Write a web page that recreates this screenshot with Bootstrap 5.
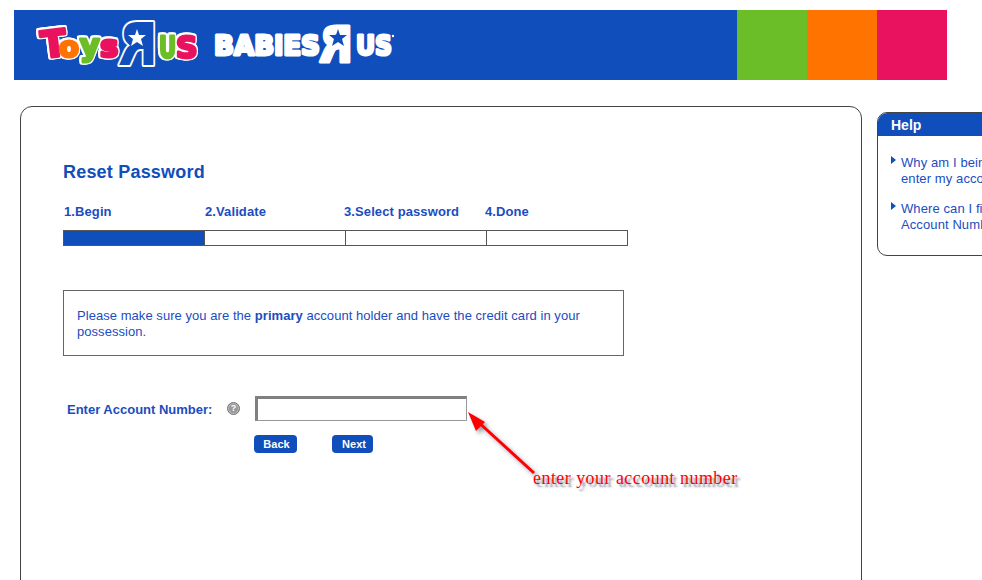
<!DOCTYPE html>
<html lang="en">
<head>
  <meta charset="UTF-8">
  <meta name="viewport" content="width=device-width, initial-scale=1.0">
  <title>Reset Password</title>
  <link href="https://cdn.jsdelivr.net/npm/bootstrap@5.3.0/dist/css/bootstrap.min.css" rel="stylesheet">
  <style>
    html, body { height: 580px; overflow: hidden; }
    body { background: #fff; color: #1a4dbf; font-family: "Liberation Sans", Arial, sans-serif; font-size: 12px; position: relative; }
    .site-banner { margin: 10px 0 0 14px; width: 933px; height: 70px; background: #104ebb; }
    .site-banner svg { display: block; }
    .swatch { width: 70px; height: 70px; }
    .swatch-green { background: #6cbe28; }
    .swatch-orange { background: #ff7300; }
    .swatch-pink { background: #e9125f; }
    .page-row { margin: 26px 0 0 20px; width: 1100px; }
    .main-panel { width: 842px; height: 520px; flex: none; border: 1px solid #444; border-radius: 12px; padding: 55px 0 0 42px; background: #fff; }
    .page-title { font-size: 18px; font-weight: 700; line-height: 21px; margin: 0 0 21px 0; color: #104ebb; letter-spacing: .2px; }
    .step-labels { font-size: 13px; font-weight: 700; line-height: 16px; margin-bottom: 10px; letter-spacing: .1px; }
    .step-label { width: 141px; padding-left: 1px; }
    .step-label:nth-child(2) { width: 139px; }
    .step-bar { width: 565px; height: 16px; border: 1px solid #555; }
    .step-cell { width: 141px; flex: none; border-right: 1px solid #555; }
    .step-cell:last-child { width: 140px; border-right: 0; }
    .step-on { background: #104ebb; }
    .notice-box { width: 561px; height: 66px; margin-top: 44px; border: 1px solid #666; padding: 17px 13px; line-height: 16px; font-size: 13px; letter-spacing: .05px; }
    .notice-box p { margin: 0; width: 520px; }
    .acct-row { margin-top: 40px; height: 25px; }
    .acct-label { width: 164px; margin-top: 2px; padding-left: 4px; font-weight: 700; font-size: 13px; white-space: nowrap; }
    .acct-help { width: 13px; height: 13px; flex: none; border-radius: 50%; background: #999; border: 1px solid #777; color: #fff; font-size: 9px; font-weight: 700; line-height: 11px; text-align: center; margin-right: 15px; box-shadow: inset 0 0 0 1px #bbb; }
    .acct-input { width: 212px; height: 25px; border-style: solid; border-width: 3px 1px 1px 3px; border-color: #808080 #999 #999 #808080; background: #fff; padding: 0; outline: 0; }
    .form-btns { margin: 14px 0 0 191px; }
    .blue-btn { background: #104ebb; border: 0; border-radius: 4px; color: #fff; font-size: 11px; font-weight: 700; height: 18px; line-height: 18px; padding: 0 0 0 2px; }
    .blue-btn:hover { background: #104ebb; color: #fff; }
    .back-btn { width: 43px; margin-right: 35px; }
    .next-btn { width: 41px; padding-left: 3px; }
    .help-panel { width: 200px; height: 144px; margin: 6px 0 0 15px; flex: none; border: 1px solid #444; border-radius: 10px; overflow: hidden; }
    .help-panel .card-header { background: #104ebb; color: #fff; font-size: 14px; font-weight: 700; height: 23px; line-height: 24px; padding: 0 0 0 13px; border: 0; border-radius: 0; }
    .help-panel ul { margin: 19px 0 0 12px; font-size: 13px; letter-spacing: .1px; }
    .help-panel li { position: relative; padding-left: 11px; line-height: 16px; white-space: nowrap; margin-bottom: 14px; }
    .help-panel li::before { content: ""; position: absolute; left: 1px; top: 1px; border-style: solid; border-width: 4px 0 4px 5px; border-color: transparent transparent transparent #104ebb; }
    .help-panel a { color: #1a4dbf; text-decoration: none; }
    .note-arrow { position: absolute; left: 460px; top: 405px; filter: drop-shadow(3px 3px 2px rgba(60,60,90,.5)); }
    .note-text { position: absolute; left: 533px; top: 467px; font-family: "Liberation Serif", "Times New Roman", serif; font-size: 18px; line-height: 22px; color: #f00; letter-spacing: .45px; white-space: nowrap; text-shadow: 3px 3px 2px rgba(60,60,90,.55); }
    .logo-word { font-family: "DejaVu Sans", sans-serif; font-weight: 700; stroke-linejoin: round; }
    .logo-toys { stroke-width: 3; filter: drop-shadow(1.5px 0 0 #fff) drop-shadow(-1.5px 0 0 #fff) drop-shadow(0 1.5px 0 #fff) drop-shadow(0 -1.5px 0 #fff); }
    .logo-babies { fill: #fff; stroke: #fff; stroke-width: 3; }
    .logo-r { paint-order: stroke; stroke: #fff; stroke-width: 4; fill: #104ebb; }
  </style>
</head>
<body>

  <!-- Banner -->
  <header class="site-banner d-flex justify-content-between">
    <svg width="723" height="70" viewBox="0 0 723 70" role="img" aria-label="Toys R Us, Babies R Us">
      <!-- Toys R Us -->
      <g class="logo-word logo-toys">
        <text x="27" y="47" font-size="37" fill="#e9125f" stroke="#e9125f" transform="rotate(-7 38 33)">T</text>
        <text x="45" y="47" font-size="29" fill="#ff7300" stroke="#ff7300">o</text>
        <text x="66" y="46" font-size="30" fill="#6cbe28" stroke="#6cbe28">y</text>
        <text x="86" y="47" font-size="31" fill="#e9125f" stroke="#e9125f">s</text>
        <text transform="translate(145 48) scale(.68 1)" font-size="31" fill="#6cbe28" stroke="#6cbe28">U</text>
        <text x="162" y="48" font-size="30" fill="#e9125f" stroke="#e9125f">S</text>
      </g>
      <text class="logo-word logo-r" text-anchor="middle" transform="translate(124 55) scale(-.88 1)" font-size="59">R</text>
      <ellipse cx="123" cy="27" rx="11" ry="11" fill="#104ebb"/>
      <polygon points="123,19 125,25 132,25 127,29 129,36 123,32 117,36 119,29 114,25 121,25" fill="#fff"/>
      <!-- Babies R Us -->
      <g class="logo-word logo-babies">
        <text x="200" y="45" font-size="27" textLength="106" lengthAdjust="spacingAndGlyphs">BABiES</text>
        <text x="342" y="45" font-size="27" textLength="36" lengthAdjust="spacingAndGlyphs">US</text>
      </g>
      <text class="logo-word logo-babies" text-anchor="middle" transform="translate(322 52) scale(-.88 1)" font-size="50">R</text>
      <polygon points="324,19 326,25 333,25 328,29 330,36 324,32 318,36 320,29 315,25 322,25" fill="#104ebb"/>
      <circle cx="379" cy="26" r="1.2" fill="#fff"/>
    </svg>
    <div class="d-flex">
      <div class="swatch swatch-green"></div>
      <div class="swatch swatch-orange"></div>
      <div class="swatch swatch-pink"></div>
    </div>
  </header>

  <div class="page-row d-flex align-items-start">
    <!-- Main content -->
    <main class="main-panel">
      <h1 class="page-title">Reset Password</h1>
      <div class="step-labels d-flex">
        <div class="step-label">1.Begin</div>
        <div class="step-label">2.Validate</div>
        <div class="step-label">3.Select password</div>
        <div class="step-label">4.Done</div>
      </div>
      <div class="step-bar d-flex">
        <div class="step-cell step-on"></div>
        <div class="step-cell"></div>
        <div class="step-cell"></div>
        <div class="step-cell"></div>
      </div>
      <div class="notice-box">
        <p>Please make sure you are the <strong>primary</strong> account holder and have the credit card in your possession.</p>
      </div>
      <div class="acct-row d-flex align-items-center">
        <label class="acct-label" for="acct">Enter Account Number:</label>
        <span class="acct-help">?</span>
        <input class="acct-input" id="acct" type="text">
      </div>
      <div class="form-btns d-flex">
        <button class="btn blue-btn back-btn" type="button">Back</button>
        <button class="btn blue-btn next-btn" type="button">Next</button>
      </div>
    </main>

    <!-- Help -->
    <aside class="card help-panel">
      <div class="card-header">Help</div>
      <ul class="list-unstyled">
        <li><a href="#">Why am I being asked to<br>enter my account number?</a></li>
        <li><a href="#">Where can I find my<br>Account Number?</a></li>
      </ul>
    </aside>
  </div>

  <!-- Annotation -->
  <svg class="note-arrow" width="85" height="80" viewBox="0 0 85 80">
    <line x1="74" y1="68" x2="16" y2="15" stroke="#f00" stroke-width="3"/>
    <polygon points="8,7 25,17 16,26" fill="#f00"/>
  </svg>
  <div class="note-text">enter your account number</div>

  <script src="https://cdn.jsdelivr.net/npm/bootstrap@5.3.0/dist/js/bootstrap.bundle.min.js"></script>
</body>
</html>
